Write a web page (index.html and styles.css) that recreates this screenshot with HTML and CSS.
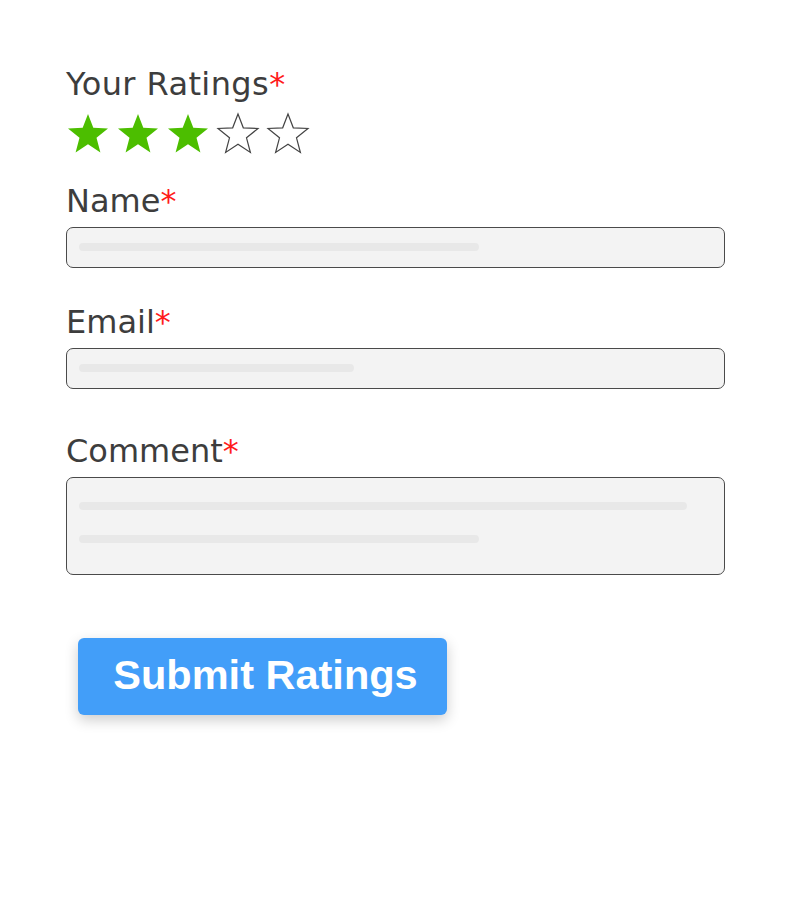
FILE: index.html
```html
<!DOCTYPE html>
<html>
<head>
<meta charset="utf-8">
<link rel="stylesheet" href="styles.css">
</head>
<body>
<form class="form">
  <div class="label label-ratings">Your Ratings<span class="req">*</span></div>
  <div class="stars">
    <svg class="star" viewBox="0 0 44 44"><polygon class="full" points="22,2 27.3,15.8 42,16.5 30.5,25.8 34.4,40.5 22,32.3 9.6,40.5 13.5,25.8 2,16.5 16.7,15.8"/></svg>
    <svg class="star" viewBox="0 0 44 44"><polygon class="full" points="22,2 27.3,15.8 42,16.5 30.5,25.8 34.4,40.5 22,32.3 9.6,40.5 13.5,25.8 2,16.5 16.7,15.8"/></svg>
    <svg class="star" viewBox="0 0 44 44"><polygon class="full" points="22,2 27.3,15.8 42,16.5 30.5,25.8 34.4,40.5 22,32.3 9.6,40.5 13.5,25.8 2,16.5 16.7,15.8"/></svg>
    <svg class="star" viewBox="0 0 44 44"><polygon class="empty" points="22,2 27.3,15.8 42,16.5 30.5,25.8 34.4,40.5 22,32.3 9.6,40.5 13.5,25.8 2,16.5 16.7,15.8"/></svg>
    <svg class="star" viewBox="0 0 44 44"><polygon class="empty" points="22,2 27.3,15.8 42,16.5 30.5,25.8 34.4,40.5 22,32.3 9.6,40.5 13.5,25.8 2,16.5 16.7,15.8"/></svg>
  </div>
  <div class="label label-name">Name<span class="req">*</span></div>
  <div class="field"><span class="bar bar-400"></span></div>
  <div class="label label-email">Email<span class="req">*</span></div>
  <div class="field"><span class="bar bar-275"></span></div>
  <div class="label label-comment">Comment<span class="req">*</span></div>
  <div class="field area"><span class="bar bar-608"></span><span class="bar bar-400"></span></div>
  <button type="button" class="submit">Submit Ratings</button>
</form>
</body>
</html>
```
FILE: styles.css
```css
html, body { margin: 0; padding: 0; background: #fff; }
.form {
  width: 659px;
  margin-left: 66px;
  padding-top: 64px;
  padding-bottom: 120px;
  display: flex;
  flex-direction: column;
  align-items: stretch;
}
.label {
  font-family: "DejaVu Sans", sans-serif;
  font-size: 32px;
  color: #3d3d3d;
  line-height: 40px;
  height: 40px;
  white-space: nowrap;
}
.label-ratings { letter-spacing: 0.4px; }
.req { color: #ff1a1a; }
.stars { display: flex; gap: 6px; margin-top: 8px; height: 44px; }
.star { width: 44px; height: 44px; display: block; }
.full { fill: #4cbe00; }
.empty { fill: #fff; stroke: #444; stroke-width: 1.2; }
.label-name { margin-top: 25px; }
.label-email { margin-top: 34px; }
.label-comment { margin-top: 42px; }
.field {
  margin-top: 6px;
  box-sizing: border-box;
  height: 41px;
  border: 1px solid #4a4a4a;
  border-radius: 7px;
  background: #f3f3f3;
  padding: 15px 12px 0;
  display: flex;
  flex-direction: column;
  gap: 25px;
}
.area { height: 98px; padding-top: 24px; }
.bar { display: block; height: 8px; border-radius: 4px; background: #e8e8e8; }
.bar-400 { width: 400px; }
.bar-275 { width: 275px; }
.bar-608 { width: 608px; }
.submit {
  align-self: flex-start;
  margin-top: 63px;
  margin-left: 12px;
  width: 369px;
  height: 77px;
  border: none;
  border-radius: 6px;
  background: #429ef9;
  color: #fff;
  font-family: "Liberation Sans", Arial, sans-serif;
  font-weight: bold;
  font-size: 41.5px;
  box-shadow: 0 5px 14px rgba(0,0,0,0.2);
  padding: 0 0 4px 6px;
}
```
